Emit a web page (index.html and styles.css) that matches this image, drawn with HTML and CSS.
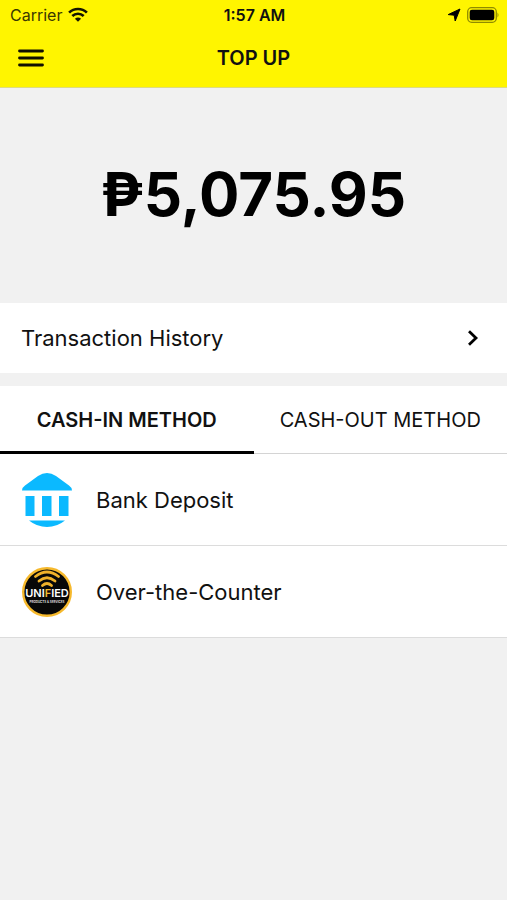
FILE: index.html
```
<!DOCTYPE html>
<html lang="en">
<head>
<meta charset="utf-8">
<meta name="viewport" content="width=device-width, initial-scale=1">
<title>Top Up</title>
<link rel="stylesheet" href="styles.css">
</head>
<body>
<header class="header">
  <div class="status">
    <div class="status-side">
      <span class="carrier">Carrier</span>
      <svg class="wifi" width="20" height="15" viewBox="0 0 20 15" aria-hidden="true">
        <g fill="none" stroke="#151500" stroke-width="2.7">
          <path d="M1.1 5.6C6.1.8 13.900.8 18.900 5.6"/>
          <path d="M4.300 9C7.500 6 12.500 6 15.700 9"/>
        </g>
        <path d="M10 14.800L6.900 11.700Q10 9.200 13.100 11.700Z" fill="#151500"/>
      </svg>
    </div>
    <span class="time">1:57 AM</span>
    <div class="status-side status-end">
      <svg width="14" height="14" viewBox="0 0 14 14" aria-hidden="true"><path d="M13 1L8.200 13 7.200 7.200 1.200 6.600Z" fill="#000" stroke="#000" stroke-linejoin="round"/></svg>
      <svg width="32" height="16" viewBox="0 0 32 16" aria-hidden="true">
        <rect x=".7" y=".7" width="28.600" height="14.600" rx="4" fill="none" stroke="#8f8b00" stroke-width="1.300"/>
        <rect x="2.700" y="2.700" width="24.600" height="10.600" rx="2.300" fill="#000"/>
        <path d="M30.500 5.500Q32.500 8 30.500 10.500Z" fill="#8f8b00"/>
      </svg>
    </div>
  </div>
  <nav class="navbar">
    <button class="menu" type="button" aria-label="Menu">
      <svg width="26" height="18" viewBox="0 0 26 18" aria-hidden="true"><path d="M1.500 2H24.500M1.500 9H24.500M1.500 16H24.500" stroke="#111000" stroke-width="2.800" stroke-linecap="round"/></svg>
    </button>
    <h1 class="title">TOP UP</h1>
  </nav>
</header>
<main>
  <section class="balance" aria-label="Balance">₱5,075.95</section>
  <a class="history" href="#history">
    <span>Transaction History</span>
    <svg width="12" height="18" viewBox="0 0 12 18" aria-hidden="true"><path d="M2 2.200L9 9L2 15.800" fill="none" stroke="#000" stroke-width="2.800"/></svg>
  </a>
  <div class="tabs" role="tablist">
    <button class="tab tab-active" type="button" role="tab" aria-selected="true">CASH-IN METHOD</button>
    <button class="tab" type="button" role="tab" aria-selected="false">CASH-OUT METHOD</button>
  </div>
  <div class="methods">
    <a class="method" href="#bank">
      <svg width="52" height="56" viewBox="0 0 52 56" aria-hidden="true">
        <g fill="#0bb9ff">
          <path d="M1 18.500Q1 15.500 4 13.500L17 4Q26 -2 35 4L48 13.500Q51 15.500 51 18.500Z"/>
          <rect x="4.500" y="24" width="9" height="20"/>
          <rect x="21" y="24" width="9.500" height="20"/>
          <rect x="38" y="24" width="9.500" height="20"/>
          <path d="M8 48.500H44Q36 55 26 55T8 48.500Z"/>
        </g>
      </svg>
      <span>Bank Deposit</span>
    </a>
    <a class="method" href="#counter">
      <svg width="52" height="52" viewBox="0 0 52 52" aria-hidden="true">
        <circle cx="26" cy="26" r="23.800" fill="#080808" stroke="#f6b92d" stroke-width="2.400"/>
        <g fill="none" stroke="#efb12a" stroke-width="2.800" stroke-linecap="round">
          <path d="M14.500 10.500Q26 1.500 37.500 10.500"/>
          <path d="M18 15Q26 8.500 34 15"/>
          <path d="M21.500 19.500Q26 15.500 30.500 19.500"/>
        </g>
        <text class="logo-name" x="26" y="31" text-anchor="middle">UNI<tspan fill="#f6b92d">F</tspan>IED</text>
        <text class="logo-sub" x="26" y="37" text-anchor="middle">PRODUCTS &amp; SERVICES</text>
      </svg>
      <span>Over-the-Counter</span>
    </a>
  </div>
</main>
</body>
</html>
```
FILE: styles.css
```
* {
  box-sizing: border-box;
}

body {
  margin: 0;
  min-height: 100vh;
  background: #f1f1f1;
  color: #111;
  font-family: Inter, "Liberation Sans", sans-serif;
  font-size: 22px;
  line-height: 28px;
}

button {
  border: 0;
  padding: 0;
  background: none;
  color: inherit;
  font: inherit;
}

a {
  color: inherit;
  text-decoration: none;
}

svg {
  display: block;
  flex: none;
}

.header {
  background: #fff500;
  border-bottom: 1px solid #dedb80;
}

.status {
  display: grid;
  grid-template-columns: 1fr auto 1fr;
  align-items: center;
  height: 29px;
  padding: 0 8px 0 10px;
  font-size: 16px;
  line-height: 20px;
}

.status-side {
  display: flex;
  align-items: center;
  gap: 6px;
}

.carrier {
  color: #3a3800;
}

.time {
  font-size: 16px;
  font-weight: 600;
}

.status-end {
  justify-content: flex-end;
}

.navbar {
  display: grid;
  grid-template-columns: 1fr auto 1fr;
  align-items: center;
  height: 58px;
  padding: 0 18px;
}

.menu {
  justify-self: start;
}

.title {
  margin: 0;
  font-size: 20px;
  font-weight: 600;
  color: #111;
}

.balance {
  padding: 70px 0 73px;
  color: #000;
  font-size: 60px;
  font-weight: 700;
  line-height: 72px;
  text-align: center;
}

.history {
  display: flex;
  align-items: center;
  justify-content: space-between;
  height: 70px;
  padding: 0 28px 0 21px;
  background: #fff;
}

.tabs {
  display: flex;
  height: 68px;
  margin-top: 13px;
  background: #fff;
  box-shadow: inset 0 -1px #d4d4d4;
}

.tab {
  flex: 1;
  font-size: 20px;
  white-space: nowrap;
}

.tab-active {
  border-bottom: 3px solid #000;
  padding-top: 3px;
  font-weight: 600;
}

.method {
  display: flex;
  align-items: center;
  gap: 23px;
  height: 92px;
  padding: 0 21px;
  background: #fff;
  border-bottom: 1px solid #dcdcdc;
}

.logo-name {
  fill: #fff;
  font-size: 11px;
  font-weight: 600;
}

.logo-sub {
  fill: #ddd;
  font-size: 3px;
  font-weight: 700;
}
```
